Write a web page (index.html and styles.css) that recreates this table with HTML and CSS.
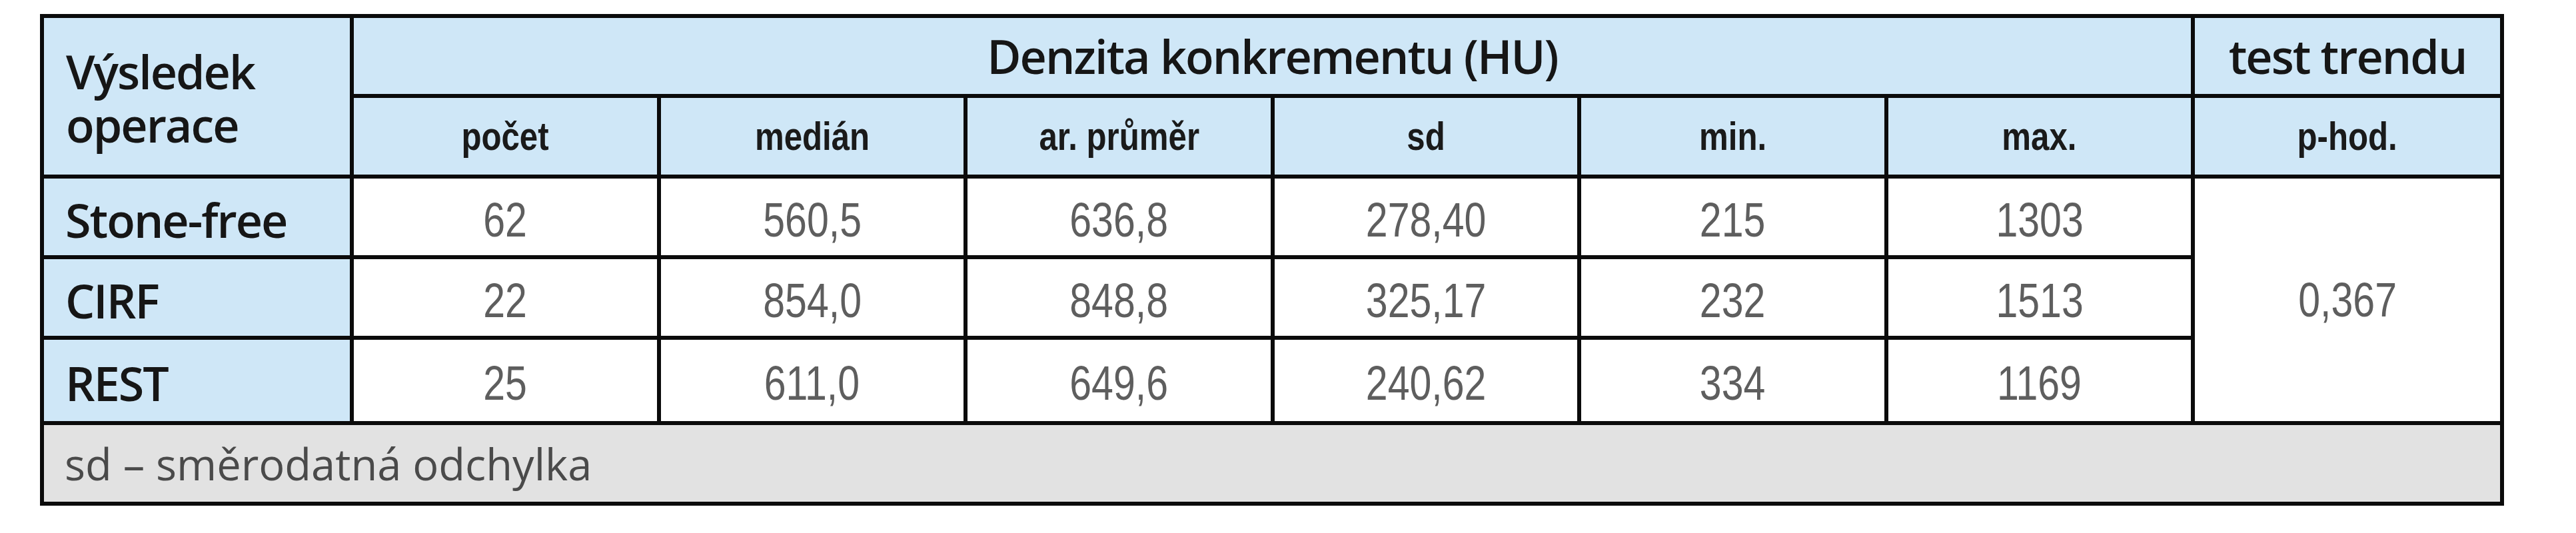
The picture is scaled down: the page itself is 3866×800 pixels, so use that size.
FILE: index.html
```html
<!DOCTYPE html>
<html lang="cs">
<head>
<meta charset="utf-8">
<title>Denzita konkrementu</title>
<link rel="stylesheet" href="styles.css">
</head>
<body>
<div class="tbl" role="table">
  <div class="c hd stub" role="columnheader"><span class="ln">Výsledek</span><span class="ln">operace</span></div>
  <div class="c hd title span6" role="columnheader">Denzita konkrementu (HU)</div>
  <div class="c hd title" role="columnheader">test trendu</div>

  <div class="c hd sub" role="columnheader"><span class="nar">počet</span></div>
  <div class="c hd sub" role="columnheader"><span class="nar">medián</span></div>
  <div class="c hd sub" role="columnheader"><span class="nar">ar. průměr</span></div>
  <div class="c hd sub" role="columnheader"><span class="nar">sd</span></div>
  <div class="c hd sub" role="columnheader"><span class="nar">min.</span></div>
  <div class="c hd sub" role="columnheader"><span class="nar">max.</span></div>
  <div class="c hd sub" role="columnheader"><span class="nar">p-hod.</span></div>

  <div class="c lbl" role="rowheader">Stone-free</div>
  <div class="c num"><span class="nar">62</span></div>
  <div class="c num"><span class="nar">560,5</span></div>
  <div class="c num"><span class="nar">636,8</span></div>
  <div class="c num"><span class="nar">278,40</span></div>
  <div class="c num"><span class="nar">215</span></div>
  <div class="c num"><span class="nar">1303</span></div>
  <div class="c num pval"><span class="nar">0,367</span></div>

  <div class="c lbl" role="rowheader">CIRF</div>
  <div class="c num"><span class="nar">22</span></div>
  <div class="c num"><span class="nar">854,0</span></div>
  <div class="c num"><span class="nar">848,8</span></div>
  <div class="c num"><span class="nar">325,17</span></div>
  <div class="c num"><span class="nar">232</span></div>
  <div class="c num"><span class="nar">1513</span></div>

  <div class="c lbl" role="rowheader">REST</div>
  <div class="c num"><span class="nar">25</span></div>
  <div class="c num"><span class="nar">611,0</span></div>
  <div class="c num"><span class="nar">649,6</span></div>
  <div class="c num"><span class="nar">240,62</span></div>
  <div class="c num"><span class="nar">334</span></div>
  <div class="c num"><span class="nar">1169</span></div>

  <div class="c foot">sd – směrodatná odchylka</div>
</div>
</body>
</html>
```

FILE: styles.css
```css
html, body {
  margin: 0;
  padding: 0;
  background: #ffffff;
}

.tbl {
  display: grid;
  grid-template-columns: 459px repeat(6, 454.5px) 458px;
  grid-template-rows: 114px 115px 115px 115px 122px 115px;
  gap: 6px;
  padding: 6px;
  background: #0b0b0b;
  width: max-content;
  margin: 21px 0 0 60px;
}

.c {
  display: flex;
  align-items: center;
  justify-content: center;
  background: #ffffff;
  box-sizing: border-box;
  white-space: nowrap;
}

.hd {
  background: #cfe7f7;
  color: #161616;
}

.stub,
.title,
.lbl {
  font-family: "Open Sans", "Noto Sans", sans-serif;
  font-weight: 600;
  font-size: 70px;
  letter-spacing: -2px;
}

.stub {
  grid-column: 1;
  grid-row: 1 / span 2;
  flex-direction: column;
  align-items: flex-start;
  justify-content: center;
  padding-left: 33px;
  padding-top: 4px;
}

.ln {
  display: block;
  height: 80px;
  line-height: 80px;
}

.span6 {
  grid-column: span 6;
}

.nar {
  display: inline-block;
  transform: scaleX(0.82);
  transform-origin: 50% 50%;
}

.sub {
  font-family: "Liberation Sans", Arial, sans-serif;
  font-weight: 700;
  font-size: 60px;
  color: #1a1a1a;
}

.lbl {
  background: #cfe7f7;
  color: #161616;
  justify-content: flex-start;
  padding-left: 32px;
  padding-top: 8px;
}

.num {
  font-family: "Liberation Sans", Arial, sans-serif;
  font-weight: 400;
  font-size: 72px;
  color: #5e5e5e;
  padding-top: 8px;
}

.pval {
  grid-column: 8;
  grid-row: 3 / span 3;
  padding-top: 0;
}

.foot {
  grid-column: 1 / -1;
  background: #e2e2e2;
  justify-content: flex-start;
  padding-left: 31px;
  font-family: "Open Sans", "Noto Sans", sans-serif;
  font-weight: 400;
  font-size: 65px;
  color: #4a4a4a;
}
```
